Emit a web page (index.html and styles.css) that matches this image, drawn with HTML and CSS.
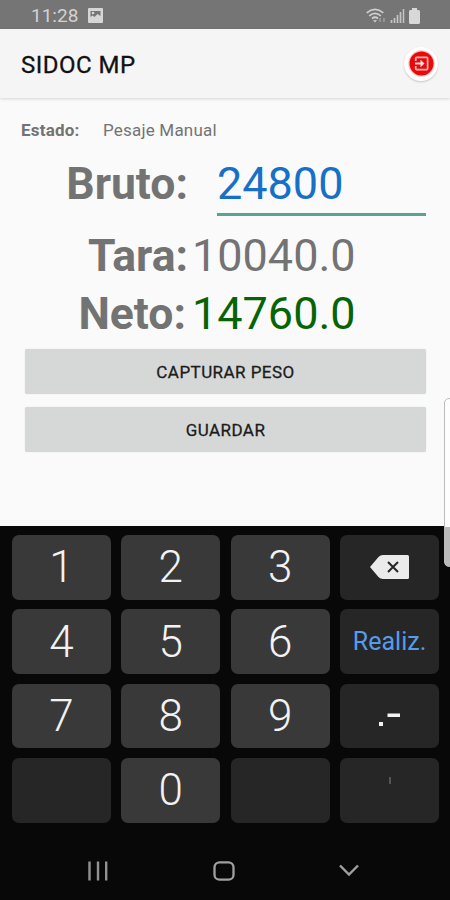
FILE: index.html
```html
<!DOCTYPE html>
<html lang="es">
<head>
    <meta charset="UTF-8">
    <meta name="viewport" content="width=device-width, initial-scale=1.0">
    <title>SIDOC MP</title>
    <link rel="stylesheet" href="styles.css">
</head>
<body>
<div class="phone">
    <div class="status-bar">
        <span class="clock">11:28</span>
        <svg class="icon-picture" width="15" height="15" viewBox="0 0 15 15">
            <rect width="15" height="15" rx="1" fill="#d6d6d6"/>
            <path d="M2.500 3h10v5L9.500 6 6.500 9 4.500 7.500 2.500 9z" fill="#757575"/>
            <circle cx="5" cy="5" r="1.300" fill="#d6d6d6"/>
        </svg>
        <div class="status-icons">
            <svg width="20" height="16" viewBox="0 0 20 16">
                <g fill="none" stroke="#d0d0d0" stroke-width="1.700">
                    <path d="M.7 4.800Q9 -2.200 17.300 4.800"/>
                    <path d="M3.200 7.800Q9 3 14.800 7.800"/>
                    <path d="M6 10.500Q9 8 12 10.500"/>
                </g>
                <path d="M7 12.200h4l-2 2.300z" fill="#d0d0d0"/>
                <path d="M14 10v4M18 10v4" stroke="#a5a5a5" stroke-width="1.300"/>
            </svg>
            <svg width="15" height="15" viewBox="0 0 15 15">
                <path d="M1.500 12v3M4.500 10v5M7.500 7v8M10.500 4v11" stroke="#c4c4c4" stroke-width="1.700"/>
                <path d="M13.500 1v14" stroke="#c4c4c4" stroke-width="1.500"/>
            </svg>
            <svg width="11" height="16" viewBox="0 0 11 16">
                <path d="M3 0h5v2h1.500Q11 2 11 3.500v11Q11 16 9.500 16h-8Q0 16 0 14.500v-11Q0 2 1.500 2H3z" fill="#d8d8d8"/>
            </svg>
        </div>
    </div>

    <header class="app-bar">
        <h1>SIDOC MP</h1>
        <button class="exit">
            <svg width="27" height="27" viewBox="0 0 27 27">
                <circle cx="13.500" cy="13.500" r="13.200" fill="#f3c4c4"/>
                <circle cx="13.500" cy="13.500" r="12" fill="#e60a0a"/>
                <path d="M7.700 11V8.200Q7.700 7.300 8.600 7.300H18.700Q19.600 7.300 19.600 8.200V18.800Q19.600 19.700 18.700 19.700H8.600Q7.700 19.700 7.700 18.800V16" fill="none" stroke="#f9b5b5" stroke-width="1.700"/>
                <path d="M7 13.500h8" fill="none" stroke="#ffe4e4" stroke-width="1.900"/>
                <path d="M12.500 9.800l4 3.700-4 3.700z" fill="#ffe4e4"/>
            </svg>
        </button>
    </header>

    <main class="content">
        <div class="state">
            <b>Estado:</b>
            <span>Pesaje Manual</span>
        </div>
        <div class="weight bruto">
            <label>Bruto:</label>
            <div class="input">24800</div>
        </div>
        <div class="weight tara">
            <label>Tara:</label>
            <span>10040.0</span>
        </div>
        <div class="weight neto">
            <label>Neto:</label>
            <span>14760.0</span>
        </div>
        <div class="actions">
            <button>CAPTURAR PESO</button>
            <button>GUARDAR</button>
        </div>
    </main>

    <div class="keyboard">
        <div class="keys">
            <div class="key">1</div>
            <div class="key">2</div>
            <div class="key">3</div>
            <div class="key fn">
                <svg width="39" height="24" viewBox="0 0 39 24">
                    <path d="M0 12L8.500 2Q10.200 0 13 0H37.500Q39 0 39 1.500V22.500Q39 24 37.500 24H13Q10.200 24 8.500 22z" fill="#ebebeb"/>
                    <path d="M18 7l10 10M28 7l-10 10" stroke="#252525" stroke-width="2"/>
                </svg>
            </div>
            <div class="key">4</div>
            <div class="key">5</div>
            <div class="key">6</div>
            <div class="key fn done">Realiz.</div>
            <div class="key">7</div>
            <div class="key">8</div>
            <div class="key">9</div>
            <div class="key fn sign">
                <svg width="22" height="16" viewBox="0 0 22 16">
                    <path d="M0 11h4v4H0zM8.500 2.500H21v3.500H8.500z" fill="#f2f2f2"/>
                </svg>
            </div>
            <div class="key fn"></div>
            <div class="key">0</div>
            <div class="key fn"></div>
            <div class="key fn tick">
                <svg width="2" height="7" viewBox="0 0 2 7"><path d="M1 0v7" stroke="#555" stroke-width="2"/></svg>
            </div>
        </div>
        <nav class="nav-bar">
            <svg width="20" height="20" viewBox="0 0 20 20">
                <path d="M1.500 .5v19M10 .5v19M18.200 .5v19" stroke="#929292" stroke-width="2.400"/>
            </svg>
            <svg width="22" height="20" viewBox="0 0 22 20">
                <rect x="1.500" y="1.300" width="19" height="17.400" rx="5" fill="none" stroke="#a0a0a0" stroke-width="2.300"/>
            </svg>
            <svg width="20" height="13" viewBox="0 0 20 13">
                <path d="M1 1.500l9 9 9-9" fill="none" stroke="#a0a0a0" stroke-width="2.400"/>
            </svg>
        </nav>
    </div>

    <div class="edge-panel"></div>
</div>
</body>
</html>
```

FILE: styles.css
```css
* {
    box-sizing: border-box;
}
body {
    margin: 0;
    font-family: Roboto, sans-serif;
    background: #fafafa;
}
button {
    font-family: inherit;
    border: none;
    padding: 0;
}
svg {
    display: block;
    flex: none;
}
.phone {
    position: relative;
    width: 450px;
    height: 900px;
    display: flex;
    flex-direction: column;
    overflow: hidden;
}
.status-bar {
    height: 29px;
    display: flex;
    align-items: center;
    padding: 2px 30px 0 31px;
    background: #757575;
    color: #d2d2d2;
}
.clock {
    width: 57px;
    font-size: 19px;
}
.status-icons {
    display: flex;
    gap: 4px;
    align-items: center;
    margin-left: auto;
}
.app-bar {
    height: 69px;
    display: flex;
    align-items: center;
    justify-content: space-between;
    padding: 0 12px 0 21px;
    background: #f5f5f5;
    box-shadow: 0 1px 3px rgba(0,0,0,0.15);
    z-index: 1;
}
.app-bar h1 {
    margin: 2px 0 0;
    font-size: 24px;
    font-weight: 400;
    letter-spacing: 0.5px;
    color: #111;
    -webkit-text-stroke: 0.3px #111;
}
.exit {
    width: 34px;
    height: 34px;
    display: flex;
    align-items: center;
    justify-content: center;
    border-radius: 50%;
    background: #fff;
    box-shadow: 0 1px 2px rgba(0,0,0,0.2);
}
.content {
    height: 428px;
    padding-top: 20px;
    color: #737373;
}
.state {
    height: 24px;
    display: flex;
    align-items: center;
    padding-left: 21px;
    font-size: 17px;
    letter-spacing: 0.2px;
}
.state b {
    width: 82px;
}
.weight {
    display: flex;
    font-size: 45px;
    line-height: 58px;
}
.weight label {
    width: 188px;
    text-align: right;
    font-weight: 700;
    font-size: 44.5px;
}
.weight span {
    padding-left: 4px;
}
.bruto {
    height: 85px;
    padding-top: 13px;
}
.bruto .input {
    width: 209px;
    height: 61px;
    margin-left: 29px;
    color: #1670c8;
    border-bottom: 3px solid #5ba292;
}
.neto label {
    padding-right: 2px;
}
.neto span {
    color: #056405;
}
.actions {
    display: flex;
    flex-direction: column;
    gap: 13px;
    padding: 6px 24px 0 25px;
}
.actions button {
    height: 45px;
    border-radius: 2px;
    background: #d6d8d7;
    color: #1c1c1c;
    font-size: 17px;
    font-weight: 400;
    letter-spacing: 0.45px;
    -webkit-text-stroke: 0.3px #1c1c1c;
    box-shadow: 0 0 1px rgba(0,0,0,0.2);
}
.keyboard {
    flex: 1;
    background: #080808;
}
.keys {
    display: grid;
    grid-template-columns: repeat(4, 1fr);
    grid-auto-rows: 64.7px;
    gap: 9.7px 10.5px;
    padding: 9px 11px 0 12px;
}
.key {
    display: flex;
    align-items: center;
    justify-content: center;
    border-radius: 7px;
    background: #393939;
    color: #f2f2f2;
    font-size: 44px;
    font-weight: 300;
}
.key.fn {
    background: #262626;
}
.key.done {
    color: #559cec;
    font-size: 25px;
    font-weight: 400;
}
.key.sign {
    padding-top: 5px;
}
.key.tick {
    align-items: flex-start;
    padding-top: 19px;
}
.nav-bar {
    display: flex;
    align-items: center;
    justify-content: space-between;
    padding: 38px 91px 0 88px;
}
.edge-panel {
    position: absolute;
    top: 398px;
    right: -4px;
    width: 10px;
    height: 169px;
    border: 1px solid #bbb;
    border-radius: 6px;
    background: linear-gradient(#fdfdfd 128px, #b9b9b9 128px);
}
```
